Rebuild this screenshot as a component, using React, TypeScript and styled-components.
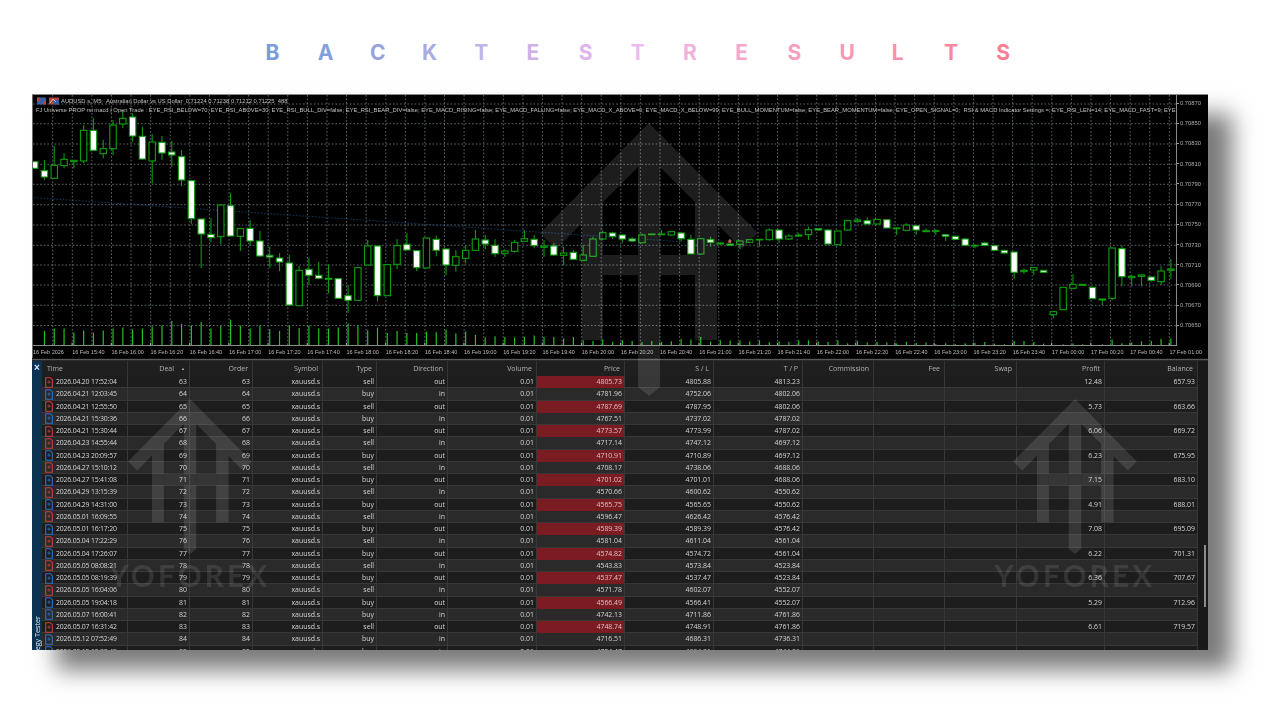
import React from "react";
import styled, { createGlobalStyle } from "styled-components";

const Global = createGlobalStyle`
  html, body { margin: 0; padding: 0; background: #fff; }
  * { box-sizing: border-box; }
`;

const Page = styled.div`
  width: 1280px;
  height: 720px;
  padding: 38px 72px 0 32px;
  overflow: hidden;
  background: #fff;
`;

const Heading = styled.h1`
  margin: 0 0 26px;
  height: 30px;
  display: flex;
  padding-left: 233.5px;
  font: 700 21px/30px Inter, "Liberation Sans", sans-serif;
`;

const HeadingLetter = styled.span<{ $color: string }>`
  width: 52.2px;
  color: ${(p) => p.$color};
`;

const Window = styled.div`
  position: relative;
  width: 1176px;
  height: 556px;
  background: #000;
  border-top: 1px solid #8a8a8a;
  display: flex;
  flex-direction: column;
  box-shadow: 24px 20px 22px rgba(0, 0, 0, 0.52);
  filter: blur(0.32px);
`;

const ChartPane = styled.div`
  height: 263px;
  display: flex;
  flex-direction: column;
  border-left: 1px solid #6a6a6a;
  background: #000;
`;

const ChartMain = styled.div`
  height: 251px;
  display: flex;
`;

const Plot = styled.div`
  position: relative;
  width: 1144px;
  height: 251px;
  overflow: hidden;
  border-right: 1px solid #8a8a8a;
  border-bottom: 1px solid #8a8a8a;
`;

const PlotSvg = styled.svg`
  display: block;
`;

const Legend = styled.div`
  position: absolute;
  left: 3px;
  top: 2px;
  right: 0;
  color: #c0c0c0;
  font: 5.82px/8.6px "Liberation Sans", sans-serif;
  white-space: pre;
`;

const LegendTop = styled.div`
  display: flex;
  align-items: center;
  gap: 1px;
  height: 8.6px;
`;

const PriceAxis = styled.div`
  flex: 1;
  padding: 4px 0 16.5px 0;
  display: flex;
  flex-direction: column;
  justify-content: space-between;
`;

const PriceLabel = styled.div`
  height: 8px;
  display: flex;
  align-items: center;
  gap: 1px;
  color: #b0b0b0;
  font: 5.8px/8px "Liberation Sans", sans-serif;
  &::before {
    content: "";
    width: 2px;
    height: 1px;
    background: #999;
  }
`;

const TimeAxis = styled.div`
  height: 12px;
  display: flex;
  align-items: center;
`;

const TimeLabel = styled.div`
  flex: 0 0 39.2px;
  color: #bcbcbc;
  white-space: nowrap;
  font: 5.5px/10px "Liberation Sans", sans-serif;
`;

const Divider = styled.div`
  height: 3px;
  background: linear-gradient(#111 0, #111 1px, #5a5a5a 1px, #5a5a5a 2px, #2a2a2a 2px);
`;

const TesterPane = styled.div`
  flex: 1;
  min-height: 0;
  display: flex;
  overflow: hidden;
  background: #1a1a1a;
`;

const Rail = styled.div`
  width: 10px;
  background: #0c3252;
  display: flex;
  flex-direction: column;
  justify-content: space-between;
  align-items: center;
  overflow: hidden;
  color: #dfe6ec;
`;

const RailClose = styled.div`
  font: 700 10px/13px "Liberation Sans", sans-serif;
`;

const RailLabel = styled.div`
  writing-mode: vertical-rl;
  transform: rotate(180deg);
  white-space: nowrap;
  margin-bottom: -16px;
  font: 7.2px/10px "Open Sans", sans-serif;
`;

const columns = "86px 62px 63px 70px 54px 71px 89px 88px 89px 89px 71px 71px 72px 88px 93px";

const Table = styled.div`
  width: 1156px;
  flex: none;
`;

const HeaderRow = styled.div`
  display: grid;
  grid-template-columns: ${columns};
  height: 15px;
  background: #1f1f1f;
`;

const HeaderCell = styled.div<{ $left?: boolean }>`
  display: flex;
  align-items: center;
  justify-content: ${(p) => (p.$left ? "flex-start" : "flex-end")};
  gap: 7px;
  padding: 0 4px 0 5px;
  color: #b2b2b2;
  border-right: 1px solid #353535;
  font: 7px/15px "Open Sans", sans-serif;
`;

const SortMark = styled.span`
  font-size: 4px;
  color: #b5b5b5;
`;

const Row = styled.div`
  display: grid;
  grid-template-columns: ${columns};
  height: 12.25px;
  background: #1d1d1d;
  box-shadow: inset 0 -1px 0 #383838;
  &:nth-child(even) {
    background: #2a2a2a;
  }
`;

const Cell = styled.div`
  display: flex;
  align-items: center;
  justify-content: flex-end;
  padding: 0 2px;
  color: #d4d4d4;
  white-space: nowrap;
  overflow: hidden;
  border-right: 1px solid #383838;
  font: 6.9px/12px "Open Sans", sans-serif;
`;

const TimeCell = styled(Cell)`
  justify-content: flex-start;
  gap: 3px;
  padding-left: 3px;
  letter-spacing: -0.18px;
`;

const PriceCell = styled(Cell)<{ $out: boolean }>`
  background: ${(p) => (p.$out ? "#7b1c23" : "transparent")};
  color: ${(p) => (p.$out ? "#dcc4c6" : "#d4d4d4")};
`;

const ScrollTrack = styled.div`
  flex: 1;
  padding: 184px 2px 0 0;
  display: flex;
  justify-content: flex-end;
  background: #191919;
`;

const ScrollThumb = styled.div`
  width: 2px;
  height: 62px;
  background: #8c8c8c;
`;

const Mark = styled.div<{ $left: number }>`
  position: absolute;
  left: ${(p) => p.$left}px;
  top: 304px;
  width: 160px;
  display: flex;
  flex-direction: column;
  align-items: center;
  pointer-events: none;
`;

const MarkLogo = styled.svg`
  display: block;
  opacity: 0.11;
`;

const MarkText = styled.div`
  margin-top: 7px;
  color: rgba(255, 255, 255, 0.1);
  white-space: nowrap;
  letter-spacing: 3.3px;
  font: 700 29.5px/30px Lato, "Open Sans", sans-serif;
`;

const BigMark = styled.svg`
  position: absolute;
  left: 508px;
  top: 28px;
  opacity: 0.115;
  pointer-events: none;
`;

const LogoShape = () => (
  <g fill="#fff">
    <polygon points="109,0 218,110 202,126 109,33 16,126 0,110" />
    <polygon points="98,30 120,30 120,264 109,273 98,264" />
    <polygon points="42,88 63,70 63,217 42,217" />
    <polygon points="155,70 177,88 177,217 155,217" />
    <rect x="63" y="132" width="35" height="20" />
    <rect x="120" y="132" width="35" height="20" />
  </g>
);

type C = [number, number, number, number, number];

const g1: C[] = [
  [228,252,230,250,1],[225,285,257,276,1],[183,280,241,280,0],[205,250,223,242,0],[225,250,226,230,0],
  [120,235,136,228,0],[100,196,136,196,1],[165,220,191,206,0],[105,210,120,191,0],[75,130,100,117,0],
  [85,170,96,153,1],[125,224,154,222,1],[148,295,171,228,0],[153,224,172,204,1],[168,245,201,210,1],
  [195,303,215,285,1],[286,416,287,401,1],[401,549,402,447,1],[400,472,448,458,1],[358,478,360,455,0],
  [325,454,362,453,1],[428,498,431,454,0],[405,483,430,468,1],[438,515,468,513,1],[485,548,511,516,1],
  [505,558,519,531,1],[510,660,534,660,1],[543,662,556,662,0],[518,600,553,571,1],[530,582,571,580,1],
  [538,625,580,583,0],[580,640,581,640,1],[600,683,632,646,1],[545,648,548,646,0],[465,540,483,540,0],
  [482,650,483,632,1],[538,632,539,632,0],[462,552,482,538,0],[445,496,478,495,1],[495,558,497,548,1],
  [458,550,459,549,0],[452,514,463,496,1],
];
const g2: C[] = [
  [445,526,447,495,1],[450,515,470,496,0],[435,490,451,475,0],[390,452,417,451,0],[405,448,420,432,1],
  [418,470,436,461,1],[448,470,453,460,0],[420,458,427,454,0],[390,425,416,424,0],[405,445,418,437,1],
  [420,470,438,442,0],[428,467,438,465,1],[440,495,459,466,0],[450,480,457,478,1],[435,482,465,481,0],
  [410,470,417,469,0],[392,420,398,417,0],[395,416,399,409,1],[402,428,405,417,1],[412,425,417,423,1],
  [400,430,405,428,0],[402,405,402,404,0],[390,405,402,404,0],[393,407,395,405,0],[395,425,399,416,1],
  [405,462,418,462,1],[415,465,416,462,0],[410,440,419,427,1],[427,434,429,432,0],[417,437,432,436,1],
  [420,448,423,433,0],[417,430,419,427,0],[418,440,418,419,0],[385,422,390,419,0],[388,428,390,417,1],
  [403,420,408,417,0],[398,410,405,408,0],[380,420,389,404,0],[386,390,386,390,1],[388,434,390,432,1],
  [392,435,393,434,0],
];
const g3: C[] = [
  [90,122,92,120,0],[83,98,90,94,0],[82,103,92,102,1],[87,103,88,102,0],[88,115,89,114,1],
  [112,135,114,116,0],[100,122,105,121,0],[105,135,107,120,1],[115,127,122,125,0],[118,135,122,124,0],
];
const g4: C[] = [
  [448,468,449,454,1],[452,465,454,463,1],[460,482,462,481,1],[478,490,481,483,0],[472,484,474,481,1],
  [480,498,482,496,1],[495,506,496,504,1],[500,582,501,562,1],[550,566,556,560,0],[546,570,548,555,0],
  [555,563,556,562,1],[678,700,680,689,0],[606,675,607,674,0],[568,610,598,610,0],[597,602,598,601,0],
  [606,642,607,641,1],[640,660,642,645,0],[488,645,489,640,0],[482,604,491,575,1],[570,604,574,578,0],
  [568,604,570,574,0],[575,590,576,586,1],[544,600,558,590,0],[522,582,552,556,0],
];
const toPx = (base: number, list: C[]): C[] =>
  list.map(([a, b, c, d, w]) => [base + a / 3, base + b / 3, base + c / 3, base + d / 3, w]);
const candles: C[] = [...toPx(85, g1), ...toPx(100, g2), ...toPx(190, g3), ...toPx(85, g4)];

const volumes = [
  0,14.7,17,17,13,15,13,15,17,18,16,17,19,20,24.7,21.7,20,23.7,17,19.7,26,20,17,20,16.3,14.7,20,17.7,20,17,17,18,22,20,15.3,18,12.7,14.7,12.7,12.7,14,
  13.3,16,12,14,10.7,8,9.3,8.7,8,8.7,10,8.7,8.7,7.3,8.7,5.3,4.7,6,3.7,5.3,4.7,3.7,4.7,3.7,4.3,6.7,6,8.7,4,5.3,5,5,4,5.3,3.3,4,3.7,5.3,5.3,4,3.7,5.3,
  2.3,4.7,3,3.7,3,2,3.7,2.7,3,1.3,2.3,1.3,2.3,2.7,3.7,2,1.3,4.7,4.7,3.7,2,0.7,1.3,2,1.3,0.7,1.3,6,2.3,3,4.3,4.7,6.7,7,
];

const barX = (i: number) => 34.67 + i * 9.795;
const gridY = [104, 123.7, 144, 164.3, 184.3, 204.7, 225, 245.3, 265, 285, 305.3, 325.5];
const gridX = Array.from({ length: 58 }, (_, i) => 52.7 + i * 19.59);

const Chart = () => (
  <PlotSvg width={1144} height={251} viewBox="33 95 1144 251">
    <g stroke="#66757d" strokeWidth="0.9" strokeDasharray="1.6 2">
      {gridY.map((y) => (
        <line key={y} x1={33} x2={1177} y1={y} y2={y} />
      ))}
      {gridX.map((x) => (
        <line key={x} x1={x} x2={x} y1={95} y2={346} />
      ))}
    </g>
    <line x1={34} y1={197.7} x2={680} y2={241.7} stroke="#12406a" strokeWidth="0.9" strokeDasharray="1.6 1.6" />
    {candles.map(([wt, wb, bt, bb, w], i) => {
      const x = barX(i);
      return (
        <g key={i}>
          <line x1={x} x2={x} y1={wt} y2={wb} stroke="#0c9a0c" strokeWidth="1.1" />
          <rect
            x={x - 3.2}
            y={bt}
            width={6.4}
            height={Math.max(bb - bt, 0.6)}
            fill={w ? "#fff" : "#000"}
            stroke="#0da00d"
            strokeWidth="1.1"
          />
        </g>
      );
    })}
    <path d="M729.7 239l.8 1.4 1.5.2-1.1 1 .3 1.5-1.5-.7-1.5.7.3-1.5-1.1-1 1.5-.2z" fill="#e2605a" />
    <g stroke="#22c422" strokeWidth="1.2">
      {volumes.map((h, i) => (
        <line key={i} x1={barX(i)} x2={barX(i)} y1={345.6} y2={345.6 - h} />
      ))}
    </g>
    {gridX.filter((_, i) => i % 2 === 1).map((x) => (
      <line key={x} x1={x - 0.2} x2={x - 0.2} y1={342.5} y2={346} stroke="#bdbdbd" strokeWidth="0.8" />
    ))}
  </PlotSvg>
);

const BarIcons = () => (
  <svg width="24" height="8" viewBox="0 0 24 8">
    <rect x="1" y="0.5" width="9" height="7" fill="#3a5fa8" />
    <rect x="1" y="0.5" width="3" height="3.5" fill="#b8413c" />
    <rect x="7" y="4" width="3" height="3.5" fill="#b8413c" />
    <rect x="13" y="0.5" width="10" height="7" fill="#b8413c" />
    <path d="M18 7.5V3h5v4.5z" fill="#2f5ea8" />
    <path d="M14 6l3-4 3 3" stroke="#e8e8e8" strokeWidth="0.7" fill="none" />
  </svg>
);

const DocIcon = ({ color }: { color: string }) => (
  <svg width="8" height="11" viewBox="0 0 8 11" style={{ flex: "none" }}>
    <path d="M.7.7h4.6l2 2v7.6H.7z" fill="none" stroke={color} strokeWidth="1.1" />
    <path d="M4 3.4v3.4M2.4 5.1h3.2" stroke={color} strokeWidth="0.8" />
  </svg>
);

type Deal = [string, number, "buy" | "sell", "in" | "out", string, string, string, string, string];
const deals: Deal[] = [
  ["2026.04.20 17:52:04",63,"sell","out","4805.73","4805.88","4813.23","12.48","657.93"],
  ["2026.04.21 12:03:45",64,"buy","in","4781.96","4752.06","4802.06","",""],
  ["2026.04.21 12:55:50",65,"sell","out","4787.69","4787.95","4802.06","5.73","663.66"],
  ["2026.04.21 15:30:36",66,"buy","in","4767.51","4737.02","4787.02","",""],
  ["2026.04.21 15:30:44",67,"sell","out","4773.57","4773.99","4787.02","6.06","669.72"],
  ["2026.04.23 14:55:44",68,"sell","in","4717.14","4747.12","4697.12","",""],
  ["2026.04.23 20:09:57",69,"buy","out","4710.91","4710.89","4697.12","6.23","675.95"],
  ["2026.04.27 15:10:12",70,"sell","in","4708.17","4738.06","4688.06","",""],
  ["2026.04.27 15:41:08",71,"buy","out","4701.02","4701.01","4688.06","7.15","683.10"],
  ["2026.04.29 13:15:39",72,"sell","in","4570.66","4600.62","4550.62","",""],
  ["2026.04.29 14:31:00",73,"buy","out","4565.75","4565.65","4550.62","4.91","688.01"],
  ["2026.05.01 16:09:55",74,"sell","in","4596.47","4626.42","4576.42","",""],
  ["2026.05.01 16:17:20",75,"buy","out","4589.39","4589.39","4576.42","7.08","695.09"],
  ["2026.05.04 17:22:29",76,"sell","in","4581.04","4611.04","4561.04","",""],
  ["2026.05.04 17:26:07",77,"buy","out","4574.82","4574.72","4561.04","6.22","701.31"],
  ["2026.05.05 08:08:21",78,"sell","in","4543.83","4573.84","4523.84","",""],
  ["2026.05.05 08:19:39",79,"buy","out","4537.47","4537.47","4523.84","6.36","707.67"],
  ["2026.05.05 16:04:06",80,"sell","in","4571.78","4602.07","4552.07","",""],
  ["2026.05.05 19:04:18",81,"buy","out","4566.49","4566.41","4552.07","5.29","712.96"],
  ["2026.05.07 16:00:41",82,"buy","in","4742.13","4711.86","4761.86","",""],
  ["2026.05.07 16:31:42",83,"sell","out","4748.74","4748.91","4761.86","6.61","719.57"],
  ["2026.05.12 07:52:49",84,"buy","in","4716.51","4686.31","4736.31","",""],
  ["2026.05.12 12:33:49",85,"buy","in","4724.47","4694.31","4744.31","",""],
];

const heads = ["Symbol","Type","Direction","Volume","Price","S / L","T / P","Commission","Fee","Swap","Profit","Balance"];
const prices = ["0.70870","0.70850","0.70830","0.70810","0.70790","0.70770","0.70750","0.70730","0.70710","0.70690","0.70670","0.70650"];
const times = [
  "16 Feb 2026","16 Feb 15:40","16 Feb 16:00","16 Feb 16:20","16 Feb 16:40","16 Feb 17:00","16 Feb 17:20","16 Feb 17:40",
  "16 Feb 18:00","16 Feb 18:20","16 Feb 18:40","16 Feb 19:00","16 Feb 19:20","16 Feb 19:40","16 Feb 20:00","16 Feb 20:20",
  "16 Feb 20:40","16 Feb 21:00","16 Feb 21:20","16 Feb 21:40","16 Feb 22:00","16 Feb 22:20","16 Feb 22:40","16 Feb 23:00",
  "16 Feb 23:20","16 Feb 23:40","17 Feb 00:00","17 Feb 00:20","17 Feb 00:40","17 Feb 01:00",
];
const titleLetters: [string, string][] = [
  ["B","#7a9cd8"],["A","#859fdb"],["C","#96a3de"],["K","#a9ace0"],["T","#c1b4e6"],["E","#d0b0e8"],["S","#e0b4ee"],["T","#eabcee"],
  ["R","#f0b2dc"],["E","#f3a8cc"],["S","#f6a0bf"],["U","#f898b4"],["L","#fa8fa9"],["T","#fb86a0"],["S","#fb7e96"],
];

const legend2 =
  "FJ Universe PROP rsi macd | Open Trade : EYE_RSI_BELOW=70; EYE_RSI_ABOVE=30; EYE_RSI_BULL_DIV=false; EYE_RSI_BEAR_DIV=false; EYE_MACD_RISING=false; EYE_MACD_FALLING=false; EYE_MACD_X_ABOVE=0; EYE_MACD_X_BELOW=99; EYE_BULL_MOMENTUM=false; EYE_BEAR_MOMENTUM=false; EYE_OPEN_SIGNAL=0;  RSI & MACD Indicator Settings =; EYE_RSI_LEN=14; EYE_MACD_FAST=9; EYE";

export default function App() {
  return (
    <Page>
      <Global />
      <Heading>
        {titleLetters.map(([l, c], i) => (
          <HeadingLetter key={i} $color={c}>{l}</HeadingLetter>
        ))}
      </Heading>
      <Window>
        <ChartPane>
          <ChartMain>
            <Plot>
              <Chart />
              <Legend>
                <LegendTop>
                  <BarIcons />
                  <span>AUDUSD.s, M5:  Australian Dollar vs US Dollar  0.71224 0.71238 0.71212 0.71225  488</span>
                </LegendTop>
                <div>{legend2}</div>
              </Legend>
            </Plot>
            <PriceAxis>
              {prices.map((p) => (
                <PriceLabel key={p}>{p}</PriceLabel>
              ))}
            </PriceAxis>
          </ChartMain>
          <TimeAxis>
            {times.map((t) => (
              <TimeLabel key={t}>{t}</TimeLabel>
            ))}
          </TimeAxis>
        </ChartPane>
        <Divider />
        <TesterPane>
          <Rail>
            <RailClose>×</RailClose>
            <RailLabel>Strategy Tester</RailLabel>
          </Rail>
          <Table>
            <HeaderRow>
              <HeaderCell $left>Time</HeaderCell>
              <HeaderCell>Deal <SortMark>▲</SortMark></HeaderCell>
              <HeaderCell>Order</HeaderCell>
              {heads.map((h) => (
                <HeaderCell key={h}>{h}</HeaderCell>
              ))}
            </HeaderRow>
            <div>
              {deals.map(([time, id, type, dir, price, sl, tp, profit, balance]) => (
                <Row key={id}>
                  <TimeCell>
                    <DocIcon color={type === "sell" ? "#c8403f" : "#2f6fc8"} />
                    {time}
                  </TimeCell>
                  <Cell>{id}</Cell>
                  <Cell>{id}</Cell>
                  <Cell>xauusd.s</Cell>
                  <Cell>{type}</Cell>
                  <Cell>{dir}</Cell>
                  <Cell>0.01</Cell>
                  <PriceCell $out={dir === "out"}>{price}</PriceCell>
                  <Cell>{sl}</Cell>
                  <Cell>{tp}</Cell>
                  <Cell />
                  <Cell />
                  <Cell />
                  <Cell>{profit}</Cell>
                  <Cell>{balance}</Cell>
                </Row>
              ))}
            </div>
          </Table>
          <ScrollTrack>
            <ScrollThumb />
          </ScrollTrack>
        </TesterPane>
        <BigMark width={218} height={273} viewBox="0 0 218 273">
          <LogoShape />
        </BigMark>
        <Mark $left={78}>
          <MarkLogo width={124} height={155} viewBox="0 0 218 273">
            <LogoShape />
          </MarkLogo>
          <MarkText>YOFOREX</MarkText>
        </Mark>
        <Mark $left={963}>
          <MarkLogo width={124} height={155} viewBox="0 0 218 273">
            <LogoShape />
          </MarkLogo>
          <MarkText>YOFOREX</MarkText>
        </Mark>
      </Window>
    </Page>
  );
}
